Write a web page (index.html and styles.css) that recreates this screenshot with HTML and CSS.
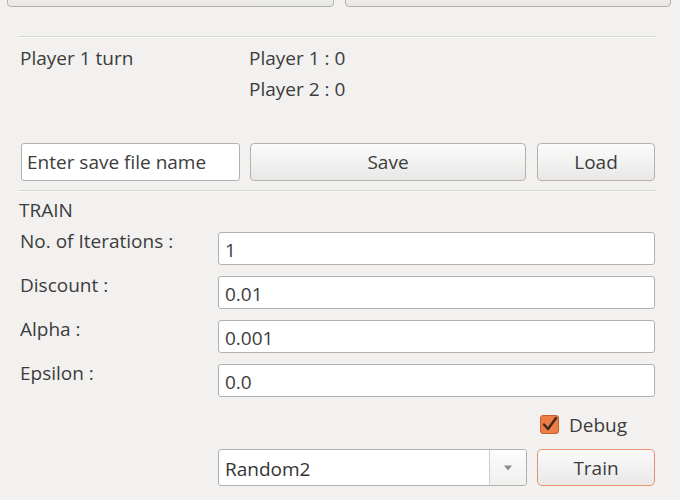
FILE: index.html
```html
<!DOCTYPE html>
<html>
<head>
<meta charset="utf-8">
<link rel="stylesheet" href="styles.css">
</head>
<body>
<div class="window">
  <div class="topbar">
    <div class="btn top-btn"></div>
    <div class="btn top-btn"></div>
  </div>
  <div class="sep sep-top"></div>
  <div class="status">
    <div class="turn">Player 1 turn</div>
    <div class="scores">
      <div>Player 1 : 0</div>
      <div>Player 2 : 0</div>
    </div>
  </div>
  <div class="save-row">
    <div class="field save-name">Enter save file name</div>
    <div class="btn save-btn">Save</div>
    <div class="btn load-btn">Load</div>
  </div>
  <div class="sep sep-mid"></div>
  <div class="section-title">TRAIN</div>
  <div class="form">
    <div class="label">No. of Iterations :</div>
    <div class="field input">1</div>
    <div class="label">Discount :</div>
    <div class="field input">0.01</div>
    <div class="label">Alpha :</div>
    <div class="field input">0.001</div>
    <div class="label">Epsilon :</div>
    <div class="field input">0.0</div>
  </div>
  <div class="debug-row">
    <div class="checkbox">
      <svg width="19" height="19" viewBox="0 0 19 19">
        <rect x="0.5" y="0.5" width="18" height="18" rx="2.5" fill="#ee7c45" stroke="#c65e2d"/>
        <path d="M4 9.5 L8 14 L16 3" fill="none" stroke="#3c2a22" stroke-width="2.4" stroke-linecap="round" stroke-linejoin="round"/>
      </svg>
    </div>
    <div class="debug-label">Debug</div>
  </div>
  <div class="bottom-row">
    <div class="combo">
      <div class="combo-text">Random2</div>
      <div class="combo-arrow">
        <svg width="10" height="6" viewBox="0 0 10 6"><path d="M1 0.5 L9 0.5 L5 5.5 Z" fill="#8a8a8a"/></svg>
      </div>
    </div>
    <div class="btn train-btn">Train</div>
  </div>
</div>
</body>
</html>
```
FILE: styles.css
```css
html, body {
  margin: 0;
  padding: 0;
  background: #f2f1f0;
}
body {
  width: 680px;
  height: 500px;
  overflow: hidden;
  font-family: "Open Sans", "DejaVu Sans", sans-serif;
  font-size: 19px;
  color: #3c3c3c;
}
.window {
  display: flex;
  flex-direction: column;
}
.btn {
  box-sizing: border-box;
  border: 1px solid #b3b1ae;
  border-radius: 4px;
  background: linear-gradient(#fbfbfb, #e9e8e7);
  display: flex;
  align-items: center;
  justify-content: center;
  line-height: 22px;
}
.field {
  box-sizing: border-box;
  border: 1px solid #b3b1ae;
  border-radius: 3px;
  background: #ffffff;
  display: flex;
  align-items: center;
  line-height: 22px;
}
.topbar {
  height: 7px;
  overflow: hidden;
  display: flex;
  align-items: flex-end;
  gap: 11px;
  padding: 0 9px 0 7px;
}
.top-btn {
  flex: 1;
  height: 30px;
  flex-shrink: 0;
}
.sep {
  height: 1px;
  background: #d9d7d4;
  margin-left: 18px;
  margin-right: 24px;
  box-shadow: 0 1px 0 #fafafa;
}
.sep-top {
  margin-top: 29px;
}
.status {
  display: grid;
  grid-template-columns: 229px auto;
  padding-left: 20px;
  margin-top: 6px;
  line-height: 31px;
}
.save-row {
  display: flex;
  margin-top: 38px;
  padding-left: 21px;
  height: 38px;
}
.save-name {
  width: 219px;
  padding-left: 5px;
}
.save-btn {
  width: 276px;
  margin-left: 10px;
}
.load-btn {
  width: 118px;
  margin-left: 11px;
}
.sep-mid {
  margin-top: 9px;
}
.section-title {
  margin-top: 8px;
  padding-left: 19px;
  line-height: 22px;
}
.form {
  display: grid;
  grid-template-columns: 198px 437px;
  grid-auto-rows: 33px;
  row-gap: 11px;
  margin-top: 11px;
  padding-left: 20px;
}
.label {
  line-height: 22px;
  margin-top: -2px;
}
.input {
  padding-left: 6px;
  padding-top: 3px;
}
.debug-row {
  display: flex;
  align-items: center;
  margin-top: 18px;
  padding-left: 540px;
  height: 19px;
}
.checkbox {
  width: 19px;
  height: 19px;
}
.checkbox svg {
  display: block;
}
.debug-label {
  margin-left: 10px;
  line-height: 22px;
}
.bottom-row {
  display: flex;
  margin-top: 15px;
  padding-left: 218px;
  height: 37px;
}
.combo {
  box-sizing: border-box;
  width: 309px;
  border: 1px solid #b3b1ae;
  border-radius: 3px;
  background: #ffffff;
  display: flex;
  overflow: hidden;
}
.combo-text {
  flex: 1;
  display: flex;
  align-items: center;
  padding-left: 6px;
  padding-top: 2px;
  color: #333333;
}
.combo-arrow {
  width: 36px;
  border-left: 1px solid #cfcdcb;
  background: linear-gradient(#fdfdfd, #f0efee);
  display: flex;
  align-items: center;
  justify-content: center;
}
.combo-arrow svg {
  display: block;
}
.train-btn {
  width: 118px;
  margin-left: 10px;
  border-color: #e8916f;
  border-radius: 5px;
}
```
